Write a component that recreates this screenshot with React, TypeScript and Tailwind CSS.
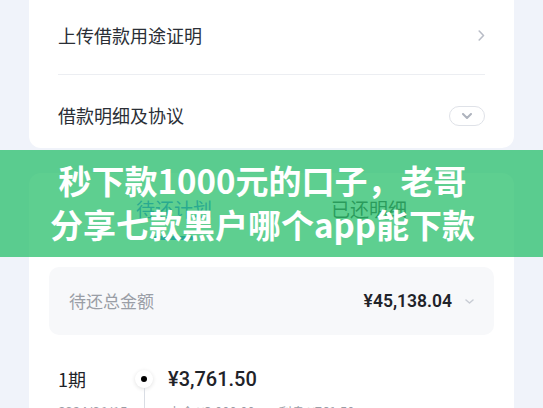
import React from "react";

function ChevronRight() {
  return (
    <svg width="7" height="11" viewBox="0 0 7 11" fill="none">
      <path d="M1.2 1l4.3 4.5L1.2 10" stroke="#b9bdc7" strokeWidth="1.6" strokeLinecap="round" strokeLinejoin="round" />
    </svg>
  );
}

function ChevronDown({ color, w, h, sw }: { color: string; w: number; h: number; sw: number }) {
  return (
    <svg width={w} height={h} viewBox={`0 0 ${w} ${h}`} fill="none">
      <path
        d={`M1 1L${w / 2} ${h - 1}L${w - 1} 1`}
        stroke={color}
        strokeWidth={sw}
        strokeLinecap="round"
        strokeLinejoin="round"
      />
    </svg>
  );
}

export default function App() {
  return (
    <div className="relative h-[408px] w-[543px] overflow-hidden bg-[#f0f3fa] font-['Noto_Sans_CJK_SC',sans-serif]">
      {/* Upper card */}
      <div className="mx-[29px] rounded-b-[12px] bg-white px-[29px]">
        <div className="flex h-[75px] items-center justify-between border-b border-[#eceef2] pb-[4px]">
          <span className="text-[18px] text-[#2b2f36]">上传借款用途证明</span>
          <ChevronRight />
        </div>
        <div className="flex h-[73px] items-center justify-between pt-[8px]">
          <span className="text-[18px] text-[#2b2f36]">借款明细及协议</span>
          <div className="flex h-[20px] w-[36px] items-center justify-center rounded-full border border-[#dfe2e8]">
            <ChevronDown color="#aeb3bd" w={10} h={6} sw={2} />
          </div>
        </div>
      </div>

      {/* Repayment card */}
      <div className="mx-[29px] mt-[25px] rounded-[12px] bg-white px-[20px]">
        <div className="flex justify-center gap-[119px] pt-[23px] pb-[3px]">
          <div className="flex flex-col items-center">
            <span className="text-[19px] leading-[26px] text-[#2f6bff]">待还计划</span>
            <div className="mt-[14px] h-[4px] w-[40px] rounded-full bg-[#2f6bff]" />
          </div>
          <div className="flex flex-col items-center">
            <span className="text-[19px] leading-[26px] text-[#333]">已还明细</span>
            <div className="mt-[14px] h-[4px] w-[40px]" />
          </div>
        </div>

        <div className="mt-[24px] flex h-[68px] items-center justify-between rounded-[10px] bg-[#f7f8fa] px-[20px]">
          <span className="text-[17px] text-[#9a9ea6]">待还总金额</span>
          <div className="flex items-center gap-[13px]">
            <span className="font-['Roboto',sans-serif] text-[17.5px] font-semibold text-[#1f2329]">¥45,138.04</span>
            <ChevronDown color="#c8ccd4" w={9} h={5} sw={1.5} />
          </div>
        </div>

        <div className="mt-[24px] flex px-[9px]">
          <div className="w-[77px]">
            <div className="flex h-[40px] items-center text-[18px] text-[#1f2329]">1期</div>
            <div className="mt-[4px] font-['Roboto',sans-serif] text-[13px] leading-[18px] text-[#9a9ea6]">2024/06/15</div>
          </div>
          <div className="flex w-[18px] flex-col items-center">
            <div className="mt-[11px] flex h-[18px] w-[18px] items-center justify-center rounded-full bg-white shadow-[0_1px_4px_rgba(0,0,0,0.12)]">
              <div className="h-[6px] w-[6px] rounded-full bg-black" />
            </div>
            <div className="h-[40px] w-px bg-[#d9dde4]" />
          </div>
          <div className="ml-[15px]">
            <div className="flex h-[40px] items-center font-['Roboto',sans-serif] text-[20px] font-medium text-[#1f2329]">
              ¥3,761.50
            </div>
            <div className="mt-[4px] flex gap-[24px] text-[13px] leading-[18px] text-[#9a9ea6]">
              <span>本金 ¥3,000.00</span>
              <span>利息 ¥761.50</span>
            </div>
          </div>
        </div>
      </div>

      {/* Green title banner over the page */}
      <div className="absolute left-0 top-[150px] flex h-[107px] w-full flex-col items-center justify-center bg-[rgba(40,191,107,0.75)] pr-[18px] pb-[3px]">
        <span className="text-[33px] font-bold leading-[44px] text-white">秒下款1000元的口子，老哥</span>
        <span className="text-[33px] font-bold leading-[44px] text-white">分享七款黑户哪个app能下款</span>
      </div>
    </div>
  );
}
